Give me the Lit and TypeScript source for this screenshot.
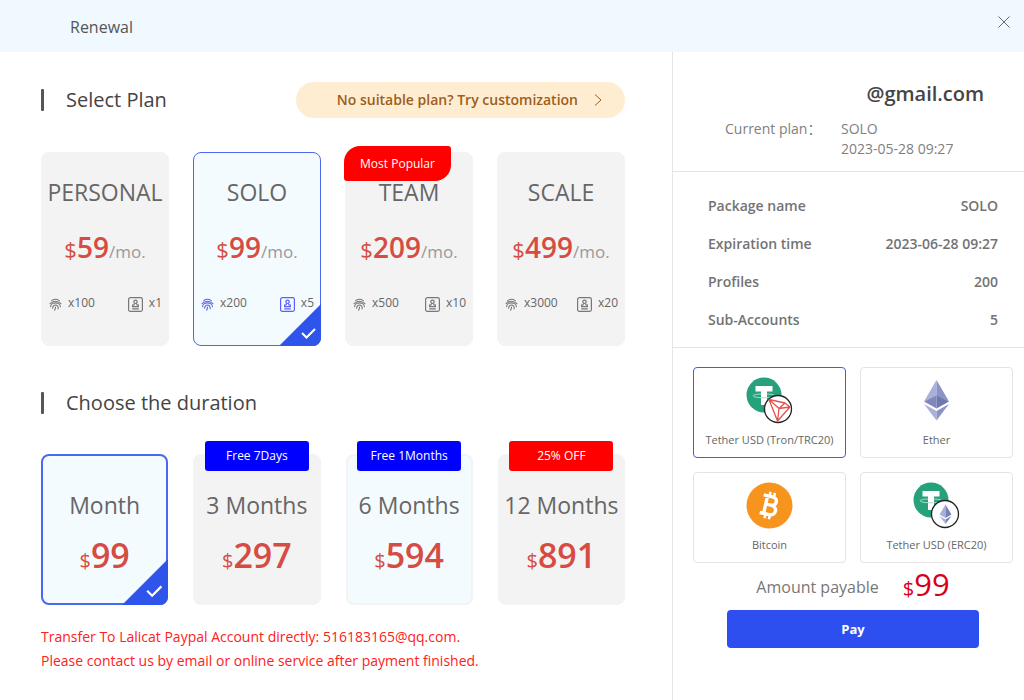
import { LitElement, html, css, svg } from "lit";
import { customElement, state } from "lit/decorators.js";
import { classMap } from "lit/directives/class-map.js";

const plans = [
  { name: "PERSONAL", price: 59, profiles: 100, seats: 1 },
  { name: "SOLO", price: 99, profiles: 200, seats: 5 },
  { name: "TEAM", price: 209, profiles: 500, seats: 10, tag: "Most Popular" },
  { name: "SCALE", price: 499, profiles: 3000, seats: 20 },
];

const durations = [
  { name: "Month", price: 99, tag: "", tone: "" },
  { name: "3 Months", price: 297, tag: "Free 7Days", tone: "blue" },
  { name: "6 Months", price: 594, tag: "Free 1Months", tone: "blue", tinted: true },
  { name: "12 Months", price: 891, tag: "25% OFF", tone: "red" },
];

const summary = [
  ["Package name", "SOLO"],
  ["Expiration time", "2023-06-28 09:27"],
  ["Profiles", "200"],
  ["Sub-Accounts", "5"],
];

const fingerprint = html`<svg class="finger" viewBox="0 0 24 24" fill="none" stroke="currentColor" stroke-width="2" stroke-linecap="round">
  <path d="M5 4.800C9 2 15 2 19 4.800M2 10.500C7 4.500 17 4.500 22 10.500M3 16C3 12 7 9 12 9S21 12 21 16M6.500 19C7.500 16 7 12.800 12 12.800S17 16 17 20M12 16.500C12 19 11.500 20.500 10.500 22.500"/>
</svg>`;

const badge = html`<svg class="badge" viewBox="0 0 15 15" fill="none" stroke="currentColor" stroke-width="1.200">
  <rect x=".6" y=".6" width="13.800" height="13.800" rx="1.800"/>
  <circle cx="7.500" cy="4.800" r="1.700"/>
  <path d="M6.600 6.500L5.900 8H4.600V9.700H10.400V8H9.100L8.400 6.500M4.200 11.900H10.800"/>
</svg>`;

const corner = html`<svg class="corner" viewBox="0 0 42 42" aria-hidden="true">
  <path d="M42 0V42H0Z" fill="#2f54eb"/>
  <path d="M23 29L27.500 33.500L36 25" fill="none" stroke="#fff" stroke-width="2"/>
</svg>`;

const tetherMark = svg`
  <circle cx="18" cy="18" r="17.500" fill="#26a17b"/>
  <path d="M9.500 9H26.500V14.500H21V28H15V14.500H9.500Z" fill="#fff"/>
  <path d="M15 17C4 17.500 4 20.500 18 20.800C32 20.500 32 17.500 21 17" fill="none" stroke="#b4dccf" stroke-width="1"/>`;

const coins = {
  tron: svg`${tetherMark}
    <circle cx="32" cy="32" r="13.500" fill="#fff" stroke="#222" stroke-width="1.300"/>
    <path d="M23 22.500L39 26L44 30L31.500 44ZM23 22.500L33 31.500L44 30M39 26L33 31.500L31.500 44" fill="none" stroke="#e0534f" stroke-width="1.300" stroke-linejoin="round"/>`,
  ether: svg`
    <path d="M23.500 3L11 24.500L23.500 19Z" fill="#a9b0da"/><path d="M23.500 3L36 24.500L23.500 19Z" fill="#8c93c6"/>
    <path d="M11 24.500L23.500 18.500V31.500Z" fill="#8087bc"/><path d="M36 24.500L23.500 18.500V31.500Z" fill="#7077b0"/>
    <path d="M11 27L23.500 34V43.500Z" fill="#a9b0da"/><path d="M36 27L23.500 34V43.500Z" fill="#8c93c6"/>`,
  bitcoin: svg`
    <circle cx="23.500" cy="23.500" r="23" fill="#f7941e"/>
    <g transform="rotate(13 23.500 23.500)" fill="none" stroke="#fff" stroke-width="3.400">
      <path d="M15.500 14.500H24.500C31 14.500 31 22.800 24.500 22.800H19.500M24.500 22.800C32.500 22.800 32.500 32.500 25 32.500H15.500M19.500 14.500V32.500"/>
      <path d="M21.500 10V15M26 10V15M21.500 32V37M26 32V37" stroke-width="2.600"/>
    </g>`,
  erc: svg`${tetherMark}
    <circle cx="32" cy="32" r="13.500" fill="#fff" stroke="#222" stroke-width="1.300"/>
    <path d="M32.500 22.500L26.500 32.500L32.500 36Z" fill="#a9b0da"/><path d="M32.500 22.500L38.500 32.500L32.500 36Z" fill="#7a81b8"/>
    <path d="M26.500 34L32.500 37.500V42Z" fill="#a9b0da"/><path d="M38.500 34L32.500 37.500V42Z" fill="#7a81b8"/>`,
};

const methods = [
  { id: "tron", label: "Tether USD (Tron/TRC20)", icon: coins.tron },
  { id: "ether", label: "Ether", icon: coins.ether },
  { id: "bitcoin", label: "Bitcoin", icon: coins.bitcoin },
  { id: "erc", label: "Tether USD (ERC20)", icon: coins.erc },
];

@customElement("app-root")
export class AppRoot extends LitElement {
  @state() private plan = "SOLO";
  @state() private duration = "Month";
  @state() private method = "tron";

  static styles = css`
    :host {
      display: flex;
      flex-direction: column;
      min-height: 100vh;
      background: #fff;
      color: #666;
      font: 14px/20px "Open Sans", "Noto Sans", "Noto Sans CJK SC", sans-serif;
    }
    *, *::before { box-sizing: border-box; }
    h1, h2, p, dl, dd { margin: 0; }
    h1, h2 { font-weight: 400; }
    button { font: inherit; color: inherit; border: 0; padding: 0; background: none; cursor: pointer; }
    svg { display: block; flex: none; }

    .bar {
      display: flex;
      justify-content: space-between;
      height: 52px;
      padding: 0 12px 0 70px;
      background: #f0f9ff;
    }
    .bar h1 { font-size: 16px; line-height: 54px; color: #555; }
    .close { align-self: start; padding: 14px 0; }
    .close svg { width: 16px; height: 16px; }

    .body { flex: 1; display: grid; grid-template-columns: minmax(0, 1fr) 352px; }
    .main { padding: 30px 47px 20px 41px; }
    .head { display: flex; align-items: center; justify-content: space-between; height: 36px; }
    .head h2 { display: flex; align-items: center; gap: 22px; font-size: 20px; line-height: 38px; color: #444; }
    .head h2::before { content: ""; width: 3px; height: 22px; background: #50585e; border-radius: 1px; }
    .custom {
      display: flex;
      align-items: center;
      gap: 14px;
      height: 36px;
      padding: 0 21px 0 41px;
      border-radius: 18px;
      background: #ffedd1;
      color: #9c5e1e;
      font-weight: 600;
    }
    .custom svg { width: 12px; height: 12px; }

    .cards { display: grid; grid-template-columns: repeat(4, minmax(0, 1fr)); }
    .plans { gap: 24px; margin: 34px 0 39px; }
    .durations { gap: 25px; margin: 33px 0 20px; }
    .card {
      position: relative;
      display: flex;
      flex-direction: column;
      align-items: center;
      border: 1px solid #f3f3f3;
      border-radius: 8px;
      background: #f3f3f3;
      white-space: nowrap;
    }
    .card.tinted { background: #f3fbff; }
    .card.on { background: #f3fbff; border-color: #4a69ee; }
    .plan { height: 194px; padding-top: 22px; }
    .duration { height: 151px; padding-top: 32px; border-width: 2px; }
    .name { font-size: 23px; line-height: 34px; }
    .price { display: flex; align-items: baseline; color: #d64c42; }
    .price small { font-size: 22px; }
    .price b { font-size: 28px; font-weight: 600; }
    .price i { font-size: 17px; font-style: normal; color: #999; }
    .plan .price { margin-top: 16px; line-height: 44px; }
    .duration .price { margin-top: 9px; line-height: 48px; }
    .duration .price small { font-size: 20px; }
    .duration .price b { font-size: 34px; }
    .limits {
      align-self: stretch;
      display: flex;
      justify-content: space-between;
      margin-top: 18px;
      padding: 0 6px 0 7px;
      font-size: 12px;
      line-height: 22px;
    }
    .limits span { display: flex; align-items: center; gap: 6px; }
    .limits svg { color: #777; margin-top: 2px; }
    .on .limits svg { color: #5b62ee; }
    .finger { width: 13px; height: 13px; }
    .badge { width: 15px; height: 15px; }
    .corner { position: absolute; right: -1px; bottom: -1px; width: 42px; height: 42px; border-bottom-right-radius: 8px; }
    .duration .corner { right: -2px; bottom: -2px; width: 46px; height: 46px; }
    .tag { position: absolute; color: #fff; font-size: 12px; text-align: center; }
    .plan .tag { left: -2px; top: -7px; width: 107px; line-height: 35px; border-radius: 16px 3px 16px 3px; background: #f00; }
    .duration .tag { left: 50%; top: -15px; width: 104px; margin-left: -52px; line-height: 30px; border-radius: 3px; }
    .tag.blue { background: #00f; }
    .tag.red { background: #f00; }
    .note { color: #ff2020; line-height: 24px; }

    .side { border-left: 1px solid #e4e4e4; }
    .account { height: 120px; padding: 26px 40px 0 52px; border-bottom: 1px solid #e4e4e4; color: #808080; }
    .account h2 { font-size: 20px; line-height: 32px; font-weight: 600; color: #444; text-align: right; }
    .current { display: grid; grid-template-columns: 116px 1fr; margin-top: 9px; }
    .summary { padding: 15px 26px 8px 35px; border-bottom: 1px solid #e4e4e4; font-weight: 600; color: #737373; }
    .summary div { display: flex; justify-content: space-between; line-height: 38px; }
    .methods { display: grid; grid-template-columns: 1fr 1fr; gap: 14px; padding: 19px 11px 0 20px; }
    .method {
      display: flex;
      flex-direction: column;
      align-items: center;
      gap: 6px;
      height: 91px;
      padding-top: 9px;
      border: 1px solid #e4e4e4;
      border-radius: 4px;
      font-size: 11px;
      white-space: nowrap;
    }
    .method.on { border-color: #3d5def; }
    .method svg { width: 47px; height: 47px; }
    .checkout { padding: 0 45px 0 54px; }
    .total { display: flex; align-items: center; justify-content: center; gap: 24px; height: 47px; font-size: 16px; color: #777; }
    .total strong { font-weight: 400; font-size: 31px; line-height: 47px; color: #d9001b; }
    .total small { font-size: 20px; }
    .pay { display: block; width: 100%; height: 38px; border-radius: 4px; background: #2d4fef; color: #fff; font-size: 13px; font-weight: 700; }
  `;

  render() {
    return html`
      <header class="bar">
        <h1>Renewal</h1>
        <button class="close" aria-label="Close">
          <svg viewBox="0 0 16 16" stroke="#666" fill="none"><path d="M2.500 2.500L13.500 13.500M13.500 2.500L2.500 13.500"/></svg>
        </button>
      </header>
      <div class="body">
        <main class="main">
          <div class="head">
            <h2>Select Plan</h2>
            <button class="custom">
              No suitable plan? Try customization
              <svg viewBox="0 0 12 12" stroke="currentColor" fill="none"><path d="M3 .5L9 6L3 11.500"/></svg>
            </button>
          </div>
          <div class="cards plans">
            ${plans.map((p) => html`
              <button class=${classMap({ card: true, plan: true, on: this.plan === p.name })}
                aria-pressed=${this.plan === p.name} @click=${() => (this.plan = p.name)}>
                <span class="name">${p.name}</span>
                <span class="price"><small>$</small><b>${p.price}</b><i>/mo.</i></span>
                <span class="limits">
                  <span>${fingerprint}x${p.profiles}</span><span>${badge}x${p.seats}</span>
                </span>
                ${p.tag ? html`<span class="tag">${p.tag}</span>` : ""}
                ${this.plan === p.name ? corner : ""}
              </button>`)}
          </div>
          <div class="head"><h2>Choose the duration</h2></div>
          <div class="cards durations">
            ${durations.map((d) => html`
              <button class=${classMap({ card: true, duration: true, tinted: !!d.tinted, on: this.duration === d.name })}
                aria-pressed=${this.duration === d.name} @click=${() => (this.duration = d.name)}>
                <span class="name">${d.name}</span>
                <span class="price"><small>$</small><b>${d.price}</b></span>
                ${d.tag ? html`<span class="tag ${d.tone}">${d.tag}</span>` : ""}
                ${this.duration === d.name ? corner : ""}
              </button>`)}
          </div>
          <p class="note">Transfer To Lalicat Paypal Account directly: 516183165@qq.com.</p>
          <p class="note">Please contact us by email or online service after payment finished.</p>
        </main>
        <aside class="side">
          <section class="account">
            <h2>@gmail.com</h2>
            <div class="current"><span>Current plan：</span><span>SOLO<br />2023-05-28 09:27</span></div>
          </section>
          <dl class="summary">
            ${summary.map(([k, v]) => html`<div><dt>${k}</dt><dd>${v}</dd></div>`)}
          </dl>
          <div class="methods">
            ${methods.map((m) => html`
              <button class=${classMap({ method: true, on: this.method === m.id })}
                aria-pressed=${this.method === m.id} @click=${() => (this.method = m.id)}>
                <svg viewBox="0 0 47 47" aria-hidden="true">${m.icon}</svg>
                <span>${m.label}</span>
              </button>`)}
          </div>
          <div class="checkout">
            <div class="total"><span>Amount payable</span><strong><small>$</small>99</strong></div>
            <button class="pay">Pay</button>
          </div>
        </aside>
      </div>
    `;
  }
}
